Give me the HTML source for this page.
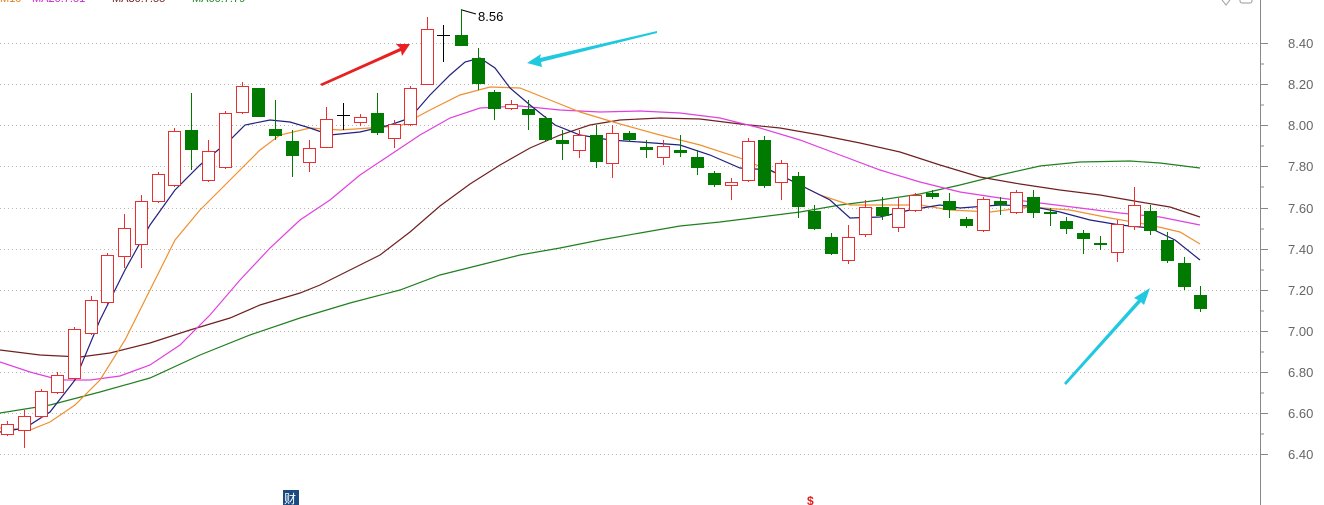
<!DOCTYPE html>
<html><head><meta charset="utf-8"><style>
html,body{margin:0;padding:0;background:#fff;width:1324px;height:505px;overflow:hidden}
svg{display:block}
text{font-family:"Liberation Sans","Noto Sans CJK SC",sans-serif}
</style></head><body>
<svg width="1324" height="505" viewBox="0 0 1324 505" xmlns="http://www.w3.org/2000/svg">
<g font-size="11">
<text x="0" y="2" fill="#e08020">M10</text>
<text x="32" y="2" fill="#d020d0">MA20:7.51</text>
<text x="112" y="2" fill="#702020">MA30:7.55</text>
<text x="192" y="2" fill="#208020">MA60:7.79</text>
</g>
<g stroke="#b8b8b8" stroke-width="1" stroke-dasharray="1,3">
<line x1="0" y1="43.5" x2="1258" y2="43.5"/><line x1="0" y1="84.5" x2="1258" y2="84.5"/>
<line x1="0" y1="125.5" x2="1258" y2="125.5"/><line x1="0" y1="166.5" x2="1258" y2="166.5"/>
<line x1="0" y1="208.5" x2="1258" y2="208.5"/><line x1="0" y1="249.5" x2="1258" y2="249.5"/>
<line x1="0" y1="290.5" x2="1258" y2="290.5"/><line x1="0" y1="331.5" x2="1258" y2="331.5"/>
<line x1="0" y1="372.5" x2="1258" y2="372.5"/><line x1="0" y1="413.5" x2="1258" y2="413.5"/>
<line x1="0" y1="454.5" x2="1258" y2="454.5"/>
</g>
<line x1="1260.5" y1="0" x2="1260.5" y2="505" stroke="#888"/>
<g stroke="#888">
<line x1="1260" y1="43.5" x2="1268" y2="43.5"/><line x1="1260" y1="84.5" x2="1268" y2="84.5"/>
<line x1="1260" y1="125.5" x2="1268" y2="125.5"/><line x1="1260" y1="166.5" x2="1268" y2="166.5"/>
<line x1="1260" y1="208.5" x2="1268" y2="208.5"/><line x1="1260" y1="249.5" x2="1268" y2="249.5"/>
<line x1="1260" y1="290.5" x2="1268" y2="290.5"/><line x1="1260" y1="331.5" x2="1268" y2="331.5"/>
<line x1="1260" y1="372.5" x2="1268" y2="372.5"/><line x1="1260" y1="413.5" x2="1268" y2="413.5"/>
<line x1="1260" y1="454.5" x2="1268" y2="454.5"/>
<line x1="1260" y1="64" x2="1264" y2="64"/><line x1="1260" y1="105" x2="1264" y2="105"/>
<line x1="1260" y1="146" x2="1264" y2="146"/><line x1="1260" y1="187" x2="1264" y2="187"/>
<line x1="1260" y1="229" x2="1264" y2="229"/><line x1="1260" y1="270" x2="1264" y2="270"/>
<line x1="1260" y1="311" x2="1264" y2="311"/><line x1="1260" y1="352" x2="1264" y2="352"/>
<line x1="1260" y1="393" x2="1264" y2="393"/><line x1="1260" y1="434" x2="1264" y2="434"/>
</g>
<g font-size="13" fill="#666">
<text x="1288" y="48">8.40</text><text x="1288" y="89">8.20</text><text x="1288" y="130">8.00</text>
<text x="1288" y="171">7.80</text><text x="1288" y="213">7.60</text><text x="1288" y="254">7.40</text>
<text x="1288" y="295">7.20</text><text x="1288" y="336">7.00</text><text x="1288" y="377">6.80</text>
<text x="1288" y="418">6.60</text><text x="1288" y="459">6.40</text>
</g>
<path d="M1222 0 L1226 5 L1230 0" fill="none" stroke="#999"/>
<rect x="1240" y="-4" width="12" height="7" rx="2" fill="none" stroke="#999"/>
<g fill="none" stroke-width="1.2">
<polyline stroke="#208020" points="0,413 50,405 100,392 150,378 200,355 250,335 300,318 350,303 400,290 440,275 480,265 520,255 560,248 600,240 640,233 680,226 720,222 760,217 800,212 840,205 880,200 920,194 960,185 1000,175 1040,166 1080,162 1130,161 1160,163 1200,168"/>
<polyline stroke="#702020" points="0,350 40,355 80,357 110,353 150,343 190,330 230,318 260,305 300,293 320,285 350,270 380,255 410,232 440,206 470,184 500,165 530,148 560,135 590,125 620,120 660,118 700,119 740,124 780,128 820,135 860,143 900,152 940,165 980,177 1020,184 1060,190 1100,195 1140,202 1170,207 1200,217"/>
<polyline stroke="#e040e0" points="0,362 30,372 60,380 90,380 120,376 150,365 180,345 210,315 240,280 270,248 300,220 330,200 360,175 390,155 420,135 450,118 480,108 520,106 560,110 600,112 640,111 680,113 720,118 760,128 800,140 840,155 880,170 920,182 960,192 1000,198 1040,203 1080,208 1120,213 1160,217 1200,225"/>
<polyline stroke="#f09030" points="0,428 30,430 50,422 75,405 100,380 125,340 150,290 175,240 200,210 230,180 260,150 280,135 310,128 340,130 370,128 400,126 430,110 460,95 490,87 520,88 550,100 580,112 620,124 660,135 700,145 740,158 780,175 820,195 850,205 880,205 920,205 950,210 990,212 1030,207 1070,210 1110,218 1150,225 1180,232 1200,244"/>
<polyline stroke="#202080" points="0,432 25,428 50,412 75,380 100,320 125,270 150,225 175,190 200,165 230,140 245,125 270,120 290,122 310,128 330,135 360,132 390,125 410,118 430,95 450,75 465,62 480,58 495,68 510,88 530,105 555,125 580,135 610,140 640,142 680,145 710,155 740,168 770,170 800,185 830,200 850,218 880,217 910,210 940,205 960,208 1000,205 1030,206 1060,212 1090,220 1120,225 1150,228 1175,240 1200,260"/>
</g>
<g id="c"></g>
<text x="478" y="21" font-size="13" fill="#000">8.56</text>
<path d="M462 10 L476 14" stroke="#000" fill="none"/>
<polygon points="320,84 400,48 396,44 410,44 402,56 401,51 322,86" fill="#e82020"/>
<polygon points="657,31 540,58 541,54 527,63 542,67 541,62 657,33" fill="#20c8e0"/>
<polygon points="1064,383 1138,300 1134,298 1150,288 1144,305 1141,302 1066,385" fill="#20c8e0"/>
<rect x="283" y="490" width="16" height="16" fill="#1a4a80"/>
<text x="284" y="503" font-size="12" fill="#fff">财</text>
<text x="807" y="505" font-size="12" fill="#e02020" font-weight="bold">$</text>
</svg>
<script>
var d=[[7,424,434,421,436,'r'],[24,416,430,410,448,'r'],[41,391,416,389,418,'r'],[57,375,392,372,394,'r'],[74,329,378,327,380,'r'],[91,300,333,296,335,'r'],[107,255,302,253,304,'r'],[124,228,256,214,268,'r'],[141,201,244,195,268,'r'],[158,174,201,172,203,'r'],[174,131,185,128,187,'r'],[191,130,150,93,170,'g'],[208,151,180,140,182,'r'],[225,113,167,111,169,'r'],[242,86,112,82,114,'r'],[258,88,117,88,117,'g'],[275,129,136,100,140,'g'],[292,141,156,130,177,'g'],[309,148,162,140,172,'r'],[326,119,147,107,148,'r'],[343,115,115,103,130,'k'],[360,117,122,114,126,'r'],[377,113,133,93,135,'g'],[394,124,138,120,148,'r'],[410,88,124,86,126,'r'],[427,29,84,17,84,'r'],[443,35,35,25,62,'k'],[461,35,46,9,46,'g'],[478,58,84,48,90,'g'],[494,92,109,90,120,'g'],[511,104,108,100,110,'r'],[528,109,115,100,130,'g'],[545,118,140,116,142,'g'],[562,140,144,130,160,'g'],[579,135,150,130,158,'r'],[596,135,162,125,168,'g'],[612,133,163,125,178,'r'],[629,133,140,131,142,'g'],[646,147,150,140,158,'g'],[663,146,157,140,165,'r'],[680,150,153,135,157,'g'],[697,157,168,150,175,'g'],[714,173,185,171,187,'g'],[731,182,185,178,200,'r'],[748,141,180,138,182,'r'],[764,140,186,136,188,'g'],[781,163,182,160,200,'r'],[798,176,207,172,218,'g'],[814,211,229,205,230,'g'],[831,237,254,233,255,'g'],[848,237,260,225,264,'r'],[865,207,234,200,237,'r'],[882,207,216,197,220,'g'],[898,208,227,198,232,'r'],[915,195,210,193,212,'r'],[932,193,197,190,199,'g'],[949,201,210,193,218,'g'],[966,219,226,217,228,'g'],[983,199,230,197,232,'r'],[1000,201,205,197,215,'g'],[1016,192,212,190,214,'r'],[1033,197,213,190,218,'g'],[1050,212,213,208,226,'g'],[1066,221,229,217,234,'g'],[1083,233,239,230,254,'g'],[1100,243,245,236,250,'g'],[1117,224,252,220,262,'r'],[1134,205,226,187,230,'r'],[1150,211,231,205,235,'g'],[1167,240,261,232,263,'g'],[1184,263,287,257,290,'g'],[1200,295,309,286,312,'g']];
var s='';d.forEach(function(c){var x=c[0],col=c[5]=='r'?'#e83030':(c[5]=='g'?'#007a00':'#000');
s+='<line x1="'+(x+.5)+'" y1="'+c[3]+'" x2="'+(x+.5)+'" y2="'+c[4]+'" stroke="'+col+'"/>';
if(c[5]=='k'){s+='<line x1="'+(x-6)+'" y1="'+(c[1]+.5)+'" x2="'+(x+7)+'" y2="'+(c[1]+.5)+'" stroke="#000"/>';}
else if(c[5]=='r'){s+='<rect x="'+(x-5.5)+'" y="'+(c[1]+.5)+'" width="12" height="'+Math.max(1,c[2]-c[1])+'" fill="#fff" stroke="#e83030"/>';}
else{s+='<rect x="'+(x-6)+'" y="'+c[1]+'" width="13" height="'+Math.max(2,c[2]-c[1])+'" fill="#007a00"/>';}});
document.getElementById('c').innerHTML=s;
</script>
</body></html>
